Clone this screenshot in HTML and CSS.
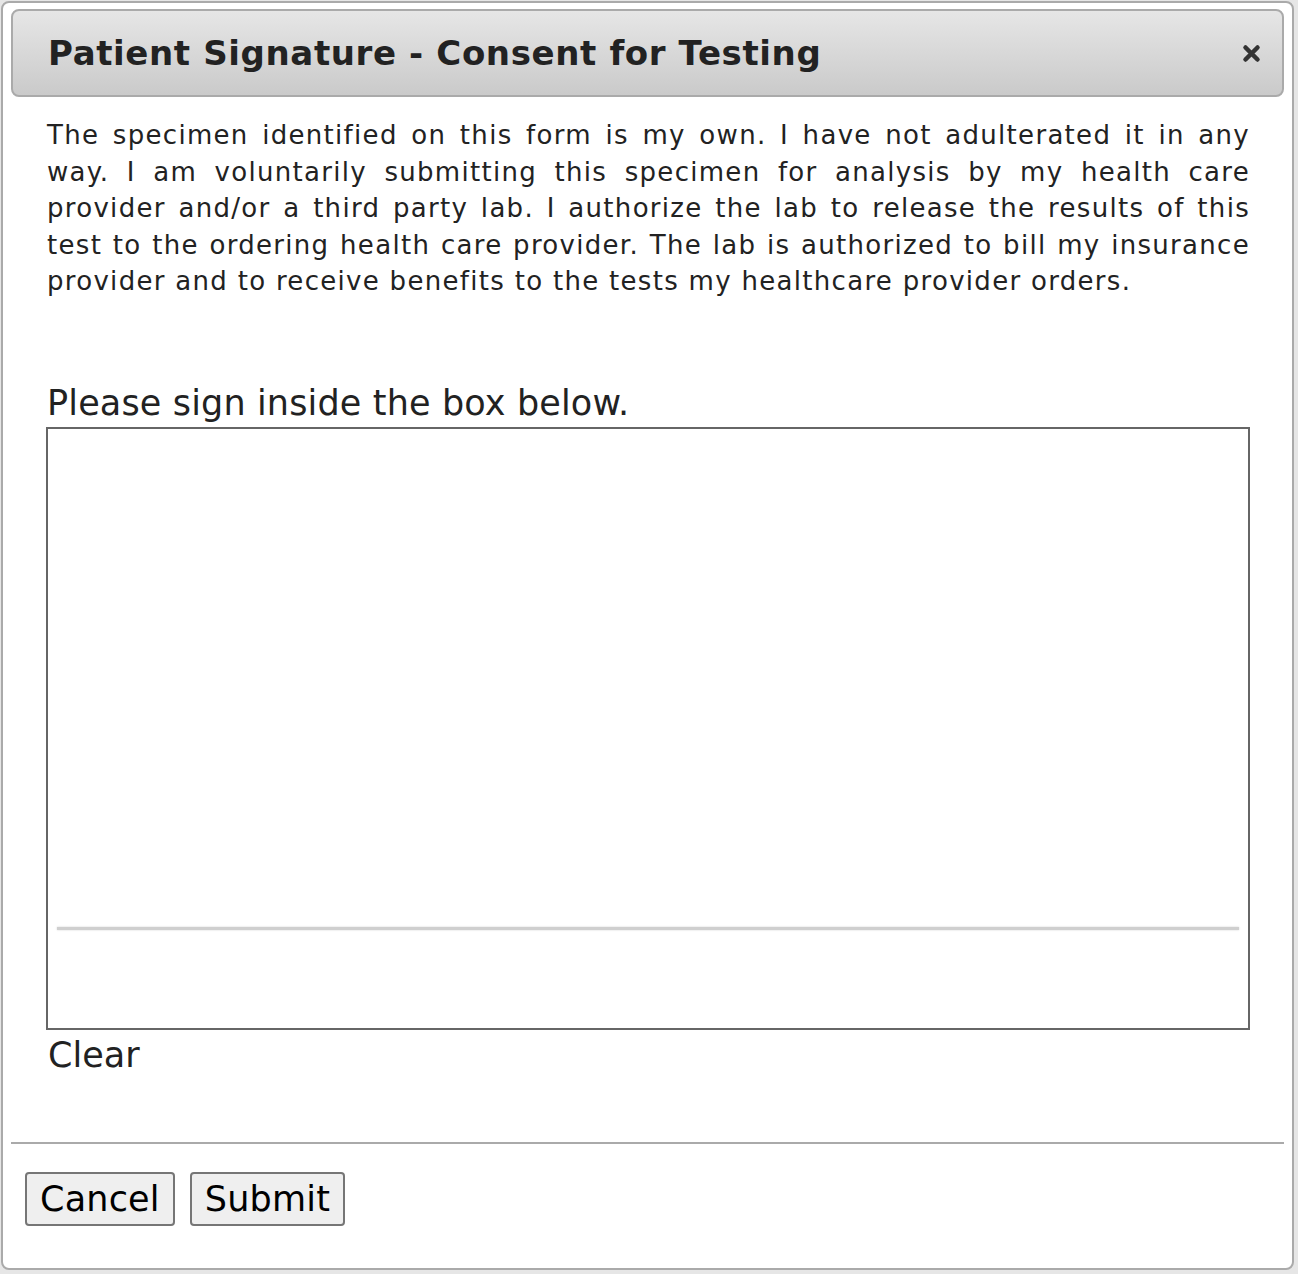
FILE: index.html
```html
<!DOCTYPE html>
<html lang="en">
<head>
    <meta charset="UTF-8">
    <meta name="viewport" content="width=device-width, initial-scale=1.0">
    <title>Patient Signature - Consent for Testing</title>
    <link rel="stylesheet" href="styles.css">
</head>
<body>
    <div class="dialog">
        <div class="dialog-titlebar">
            <span class="dialog-title">Patient Signature - Consent for Testing</span>
            <button class="dialog-close" title="Close">
                <svg width="19" height="19" viewBox="0 0 19 19">
                    <path d="M3.5 3.5 L15.5 15.5 M15.5 3.5 L3.5 15.5" stroke="#333" stroke-width="4.5" stroke-linecap="round"/>
                </svg>
            </button>
        </div>

        <div class="dialog-content">
            <p class="consent-text">The specimen identified on this form is my own. I have not adulterated it in any way. I am voluntarily submitting this specimen for analysis by my health care provider and/or a third party lab. I authorize the lab to release the results of this test to the ordering health care provider. The lab is authorized to bill my insurance provider and to receive benefits to the tests my healthcare provider orders.</p>

            <div class="sign-label">Please sign inside the box below.</div>
            <div class="sign-pad">
                <div class="sign-line"></div>
            </div>
            <a class="clear-link">Clear</a>
        </div>

        <div class="dialog-buttons">
            <button class="btn">Cancel</button>
            <button class="btn">Submit</button>
        </div>
    </div>
</body>
</html>
```

FILE: styles.css
```css
body {
    margin: 0;
    padding: 0;
    background-color: #e6e6e6;
    font-family: 'DejaVu Sans', Verdana, sans-serif;
    color: #222;
}

.dialog {
    box-sizing: border-box;
    width: 1293px;
    height: 1269px;
    margin: 1px 0 0 1px;
    padding: 6px 8px 0;
    background-color: #fff;
    border: 2px solid #aaa;
    border-radius: 8px;
    display: flex;
    flex-direction: column;
}

.dialog-titlebar {
    box-sizing: border-box;
    height: 88px;
    padding: 0 21px 0 35px;
    display: flex;
    align-items: center;
    justify-content: space-between;
    background: linear-gradient(to bottom, #e6e6e6, #cacaca);
    border: 2px solid #aaa;
    border-radius: 8px;
}

.dialog-title {
    font-size: 34px;
    font-weight: bold;
    color: #222;
    letter-spacing: 0.62px;
}

.dialog-close {
    background: none;
    border: none;
    padding: 0;
    width: 19px;
    height: 19px;
    cursor: pointer;
}

.dialog-content {
    flex: 1;
    padding: 0 34px 0 35px;
}

.consent-text {
    margin: 20px 0 0 1px;
    font-size: 26px;
    line-height: 36.5px;
    text-align: justify;
    letter-spacing: 1.3px;
}

.sign-label {
    margin-top: 81px;
    padding-left: 1px;
    font-size: 35px;
    line-height: 44px;
    letter-spacing: 0.15px;
}

.sign-pad {
    box-sizing: border-box;
    height: 603px;
    margin-top: 2px;
    border: 2px solid #666;
    padding: 498px 9px 0;
}

.sign-line {
    height: 3px;
    background-color: #cfcfcf;
    box-shadow: 0 0 2px #cfcfcf;
}

.clear-link {
    display: inline-block;
    margin: 3px 0 0 2px;
    font-size: 35px;
    line-height: 44px;
    cursor: pointer;
}

.dialog-buttons {
    border-top: 2px solid #aaa;
    height: 126px;
    padding: 28px 0 0 14px;
    box-sizing: border-box;
    display: flex;
    align-items: flex-start;
    gap: 15px;
}

.btn {
    box-sizing: border-box;
    height: 54px;
    padding: 0 13px;
    font-family: 'DejaVu Sans', Verdana, sans-serif;
    font-size: 35px;
    letter-spacing: 0.2px;
    color: #000;
    background-color: #efefef;
    border: 2px solid #767676;
    border-radius: 4px;
    cursor: pointer;
}
```
